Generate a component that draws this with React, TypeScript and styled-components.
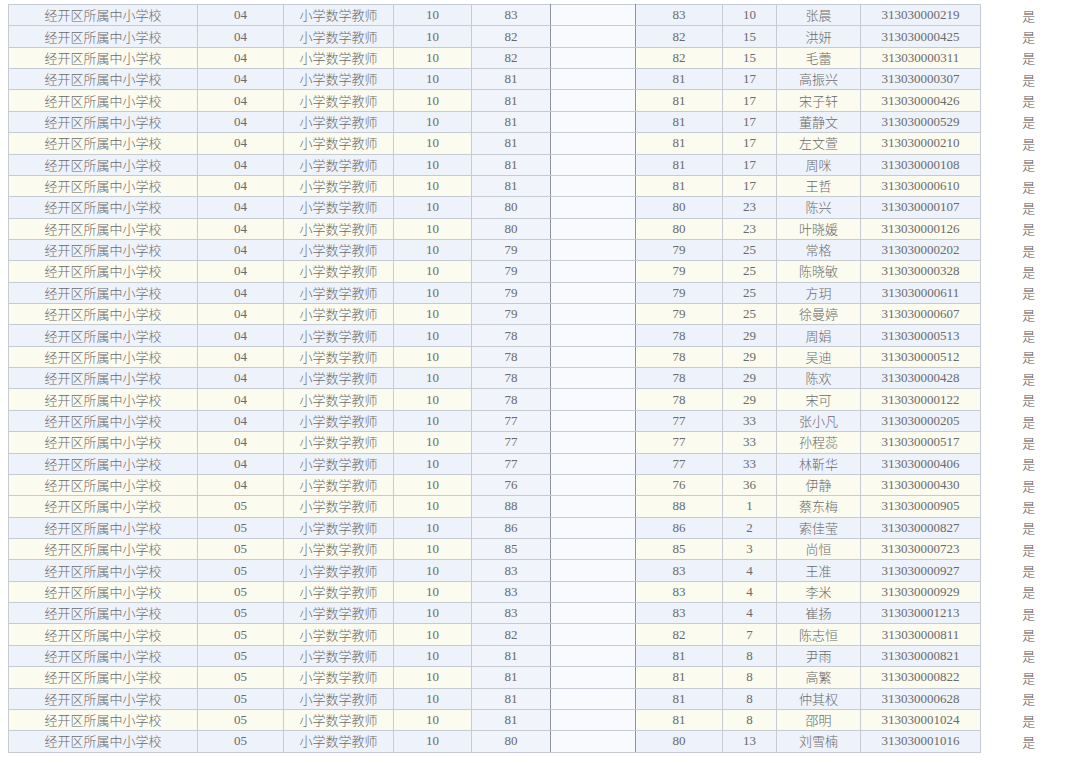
import React from "react";
import styled, { createGlobalStyle } from "styled-components";

const GlobalStyle = createGlobalStyle`
  html, body { margin: 0; padding: 0; background: #ffffff; }
  body { padding: 4px 0 0 8px; }
`;

const Table = styled.table`
  border-collapse: collapse;
  table-layout: fixed;
  width: 1068px;
  font-family: "Liberation Serif", "Noto Sans CJK SC", serif;
  font-size: 13px;
  color: #6a6a6a;
`;

type Tone = "blue" | "yellow";

const Row = styled.tr<{ $tone: Tone }>`
  height: 21.37px;
  background: ${(p) => (p.$tone === "yellow" ? "#fbfbef" : "#eef2fa")};
`;

const Cell = styled.td<{ $strong?: boolean; $cjk?: boolean }>`
  padding: 0;
  text-align: center;
  vertical-align: middle;
  line-height: 20px;
  white-space: nowrap;
  overflow: hidden;
  border: 1px solid #c6cad2;
  border-right-color: ${(p) => (p.$strong ? "#8f949c" : "#c6cad2")};
  font-family: ${(p) =>
    p.$cjk ? `"Noto Sans CJK SC", serif` : `"Liberation Serif", "Noto Sans CJK SC", serif`};
  font-weight: ${(p) => (p.$cjk ? 300 : 400)};
`;

const TintCell = styled(Cell)`
  background: #f1f4fa;
`;

const BlankCell = styled(Cell)`
  background: #f9fafd;
`;

const OutsideCell = styled.td`
  padding: 0;
  text-align: center;
  vertical-align: middle;
  background: #ffffff;
  border: none;
  border-left: 1px solid #c6cad2;
  font-family: "Noto Sans CJK SC", serif;
  font-weight: 300;
  color: #555555;
`;

const Col = styled.col<{ $w: number }>`
  width: ${(p) => p.$w}px;
`;

const data: [string, string, string, string, string][] = [
  ["04", "83", "10", "张晨", "313030000219"],
  ["04", "82", "15", "洪妍", "313030000425"],
  ["04", "82", "15", "毛蕾", "313030000311"],
  ["04", "81", "17", "高振兴", "313030000307"],
  ["04", "81", "17", "宋子轩", "313030000426"],
  ["04", "81", "17", "董静文", "313030000529"],
  ["04", "81", "17", "左文萱", "313030000210"],
  ["04", "81", "17", "周咪", "313030000108"],
  ["04", "81", "17", "王哲", "313030000610"],
  ["04", "80", "23", "陈兴", "313030000107"],
  ["04", "80", "23", "叶晓媛", "313030000126"],
  ["04", "79", "25", "常格", "313030000202"],
  ["04", "79", "25", "陈晓敏", "313030000328"],
  ["04", "79", "25", "方玥", "313030000611"],
  ["04", "79", "25", "徐曼婷", "313030000607"],
  ["04", "78", "29", "周娟", "313030000513"],
  ["04", "78", "29", "吴迪", "313030000512"],
  ["04", "78", "29", "陈欢", "313030000428"],
  ["04", "78", "29", "宋可", "313030000122"],
  ["04", "77", "33", "张小凡", "313030000205"],
  ["04", "77", "33", "孙程蕊", "313030000517"],
  ["04", "77", "33", "林靳华", "313030000406"],
  ["04", "76", "36", "伊静", "313030000430"],
  ["05", "88", "1", "蔡东梅", "313030000905"],
  ["05", "86", "2", "索佳莹", "313030000827"],
  ["05", "85", "3", "尚恒", "313030000723"],
  ["05", "83", "4", "王准", "313030000927"],
  ["05", "83", "4", "李米", "313030000929"],
  ["05", "83", "4", "崔扬", "313030001213"],
  ["05", "82", "7", "陈志恒", "313030000811"],
  ["05", "81", "8", "尹雨", "313030000821"],
  ["05", "81", "8", "高繁", "313030000822"],
  ["05", "81", "8", "仲其权", "313030000628"],
  ["05", "81", "8", "邵明", "313030001024"],
  ["05", "80", "13", "刘雪楠", "313030001016"],
];

const toneFor = (i: number): Tone => {
  if (i === 0) return "blue";
  if (i <= 22) return i % 2 === 0 ? "yellow" : "blue";
  return i % 2 === 1 ? "yellow" : "blue";
};

export default function App() {
  return (
    <>
      <GlobalStyle />
      <Table>
        <colgroup>
          <Col $w={189} />
          <Col $w={86} />
          <Col $w={110} />
          <Col $w={78} />
          <Col $w={79} />
          <Col $w={85} />
          <Col $w={87} />
          <Col $w={54} />
          <Col $w={84} />
          <Col $w={120} />
          <Col $w={96} />
        </colgroup>
        <tbody>
          {data.map(([group, score, rank, name, id], i) => (
            <Row key={id} $tone={toneFor(i)}>
              <Cell $cjk>经开区所属中小学校</Cell>
              <Cell>{group}</Cell>
              <Cell $cjk>小学数学教师</Cell>
              <Cell>10</Cell>
              <TintCell $strong>{score}</TintCell>
              <BlankCell $strong />
              <Cell>{score}</Cell>
              <Cell>{rank}</Cell>
              <Cell $cjk>{name}</Cell>
              <Cell>{id}</Cell>
              <OutsideCell>是</OutsideCell>
            </Row>
          ))}
        </tbody>
      </Table>
    </>
  );
}
